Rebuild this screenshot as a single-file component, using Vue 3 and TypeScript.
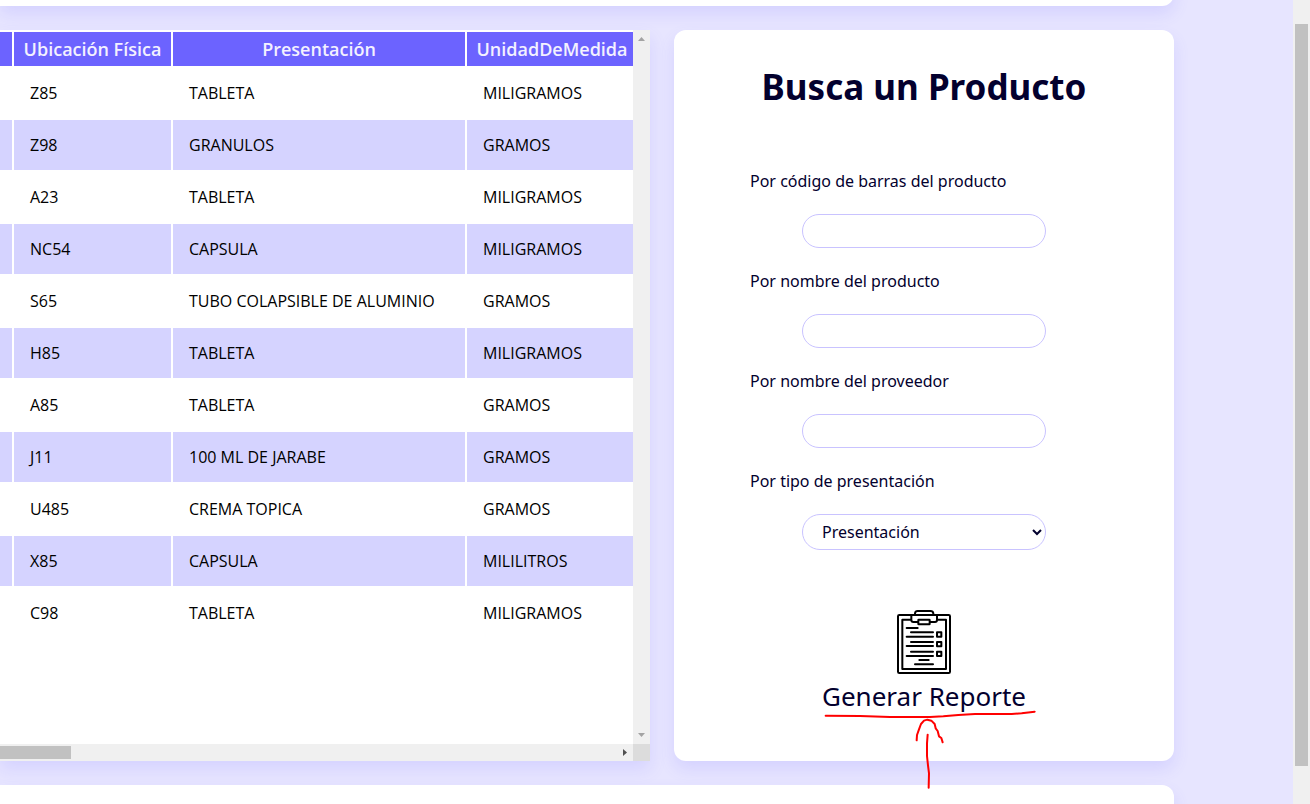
<script setup lang="ts">
import { ref } from 'vue'

interface Product {
  location: string
  form: string
  unit: string
}

interface SearchField {
  id: string
  label: string
}

const products: Product[] = [
  { location: 'Z85', form: 'TABLETA', unit: 'MILIGRAMOS' },
  { location: 'Z98', form: 'GRANULOS', unit: 'GRAMOS' },
  { location: 'A23', form: 'TABLETA', unit: 'MILIGRAMOS' },
  { location: 'NC54', form: 'CAPSULA', unit: 'MILIGRAMOS' },
  { location: 'S65', form: 'TUBO COLAPSIBLE DE ALUMINIO', unit: 'GRAMOS' },
  { location: 'H85', form: 'TABLETA', unit: 'MILIGRAMOS' },
  { location: 'A85', form: 'TABLETA', unit: 'GRAMOS' },
  { location: 'J11', form: '100 ML DE JARABE', unit: 'GRAMOS' },
  { location: 'U485', form: 'CREMA TOPICA', unit: 'GRAMOS' },
  { location: 'X85', form: 'CAPSULA', unit: 'MILILITROS' },
  { location: 'C98', form: 'TABLETA', unit: 'MILIGRAMOS' },
]

const fields: SearchField[] = [
  { id: 'barcode', label: 'Por código de barras del producto' },
  { id: 'name', label: 'Por nombre del producto' },
  { id: 'supplier', label: 'Por nombre del proveedor' },
]

const query = ref<Record<string, string>>({ barcode: '', name: '', supplier: '' })
const presentation = ref('')
</script>

<template>
  <div class="page">
    <main class="content">
      <section class="card card-above"></section>
      <div class="middle">
        <section class="table-box">
          <div class="table-view">
            <table>
              <colgroup>
                <col class="col-previous" />
                <col class="col-location" />
                <col class="col-form" />
                <col class="col-unit" />
              </colgroup>
              <thead>
                <tr>
                  <th></th>
                  <th scope="col">Ubicación Física</th>
                  <th scope="col">Presentación</th>
                  <th scope="col">UnidadDeMedida</th>
                </tr>
              </thead>
              <tbody>
                <tr v-for="product in products" :key="product.location">
                  <td></td>
                  <td>{{ product.location }}</td>
                  <td>{{ product.form }}</td>
                  <td>{{ product.unit }}</td>
                </tr>
              </tbody>
            </table>
          </div>
          <div class="bar-vertical">
            <svg width="7" height="4" viewBox="0 0 7 4"><path d="M0 4L3.5 0L7 4Z" fill="#a3a3a3" /></svg>
            <svg width="7" height="4" viewBox="0 0 7 4"><path d="M0 0L3.5 4L7 0Z" fill="#a3a3a3" /></svg>
          </div>
          <div class="bar-horizontal">
            <div class="thumb-horizontal"></div>
            <svg width="4" height="7" viewBox="0 0 4 7"><path d="M0 0L4 3.5L0 7Z" fill="#505050" /></svg>
          </div>
          <div class="bar-corner"></div>
        </section>

        <section class="card search">
          <h2>Busca un Producto</h2>
          <form @submit.prevent>
            <div v-for="field in fields" :key="field.id" class="field">
              <label :for="field.id">{{ field.label }}</label>
              <input :id="field.id" v-model="query[field.id]" type="text" />
            </div>
            <div class="field">
              <label for="presentation">Por tipo de presentación</label>
              <select id="presentation" v-model="presentation">
                <option value="">Presentación</option>
              </select>
            </div>
          </form>
          <a class="report" href="#">
            <svg class="clipboard" viewBox="51 30 162 192" fill="none" stroke="#000" stroke-width="6" stroke-linecap="round" stroke-linejoin="round">
              <rect x="54" y="45" width="156" height="174" rx="4" />
              <path d="M93 59H67V207H198V59H172" />
              <path d="M94 46V60Q94 66 100 66H114M150 66H165Q171 66 171 60V46" />
              <path d="M105 44V40Q106 33 113 33H151Q159 33 160 40V44" />
              <rect x="115" y="59" width="34" height="14" rx="1" />
              <path d="M80 84H113M93 97H159M80 110H159M93 126H159M80 138H159M93 155H159M80 168H159M118 180H146M105 193H159" />
              <path d="M171 97H184V110H171ZM171 126H184V139H171ZM171 155H184V168H171Z" />
            </svg>
            <span>Generar Reporte</span>
            <svg class="marks" viewBox="-18 90 720 300" fill="none" stroke="#f00" stroke-width="6" stroke-linecap="round" stroke-linejoin="round">
              <path d="M47 137L150 138L240 141H360L400 139L445 135L495 132H605L635 130L674 125" />
              <path d="M320 211L321 195L327 178L333 162L342 152L352 149L364 152L374 162L377 175L383 183L387 199L394 204L398 217" />
              <path d="M353 194L351 220V258L354 286L357 310L356 353" />
            </svg>
          </a>
        </section>
      </div>
      <section class="card card-below"></section>
    </main>
    <div class="page-bar"><div class="page-thumb"></div></div>
  </div>
</template>

<style>
body {
  margin: 0;
  overflow: hidden;
}
</style>

<style scoped>
.page {
  display: flex;
  height: 100vh;
  overflow: hidden;
  background: #e7e5ff;
  color: #03002e;
  font: 16px/24px "Noto Sans", sans-serif;
}

.content {
  flex: 1;
  min-width: 0;
  display: flex;
  flex-direction: column;
  gap: 24px;
  padding-right: 119px;
}

.card {
  background: #fff;
  border-radius: 12px;
  box-shadow: 0 8px 16px rgba(108, 99, 255, 0.14);
}

.card-above {
  flex: none;
  height: 32px;
  margin-top: -26px;
  border-radius: 0 12px 12px 0;
}

.card-below {
  flex: none;
  height: 40px;
  margin-bottom: -21px;
  border-radius: 0 12px 12px 0;
}

.middle {
  flex: 1;
  min-height: 0;
  display: flex;
  gap: 24px;
}

.table-box {
  flex: 1;
  min-width: 0;
  display: grid;
  grid-template-columns: minmax(0, 1fr) 17px;
  grid-template-rows: minmax(0, 1fr) 17px;
  background: #fff;
  box-shadow: 0 8px 16px rgba(108, 99, 255, 0.14);
}

.table-view {
  overflow: hidden;
}

table {
  table-layout: fixed;
  width: 641px;
  margin-left: -2px;
  border-spacing: 2px;
  color: #000;
  font-family: "Open Sans", sans-serif;
}

.col-previous {
  width: 12px;
}

.col-location {
  width: 157px;
}

.col-form {
  width: 292px;
}

th {
  height: 34px;
  padding: 0;
  background: #6c63ff;
  color: #f3f1ff;
  font-size: 18px;
  font-weight: 600;
  white-space: nowrap;
}

td {
  height: 50px;
  padding: 0 16px;
  white-space: nowrap;
}

th:first-child,
td:first-child {
  padding: 0;
}

tbody tr:nth-child(even) td {
  background: #d5d3ff;
}

.bar-vertical {
  display: flex;
  flex-direction: column;
  align-items: center;
  justify-content: space-between;
  padding: 7px 0;
  background: #f0f0f0;
}

.bar-horizontal {
  display: flex;
  align-items: center;
  justify-content: space-between;
  padding-right: 6px;
  background: #f0f0f0;
}

.thumb-horizontal {
  width: 71px;
  height: 13px;
  background: #c1c1c1;
}

.bar-corner {
  background: #dcdcdc;
}

.search {
  flex: none;
  box-sizing: border-box;
  width: 500px;
  padding: 32px 76px;
  display: flex;
  flex-direction: column;
  align-items: center;
}

h2 {
  margin: 0 0 56px;
  font-size: 35px;
  line-height: 50px;
  font-weight: 700;
}

form {
  align-self: stretch;
  display: flex;
  flex-direction: column;
  gap: 20px;
}

.field {
  display: flex;
  flex-direction: column;
  align-items: center;
  gap: 20px;
}

label {
  align-self: stretch;
  line-height: 26px;
}

input,
select {
  box-sizing: border-box;
  width: 244px;
  height: 34px;
  padding: 0 16px;
  border: 1px solid #c9c3ff;
  border-radius: 18px;
  background: #fff;
  color: inherit;
  font: inherit;
  outline: none;
}

select {
  height: 36px;
  padding: 0 0 0 15px;
}

.report {
  position: relative;
  display: flex;
  flex-direction: column;
  align-items: center;
  margin-top: 60px;
  color: inherit;
  font-size: 26px;
  line-height: 44px;
  text-decoration: none;
}

.clipboard {
  width: 54px;
  height: 64px;
}

.marks {
  position: absolute;
  top: 90px;
  left: 50%;
  width: 240px;
  height: 100px;
  margin-left: -120px;
}

.page-bar {
  flex: none;
  width: 17px;
  display: flex;
  justify-content: center;
  background: #f0f0f0;
}

.page-thumb {
  width: 13px;
  margin: 24px 0 38px;
  background: #c1c1c1;
}
</style>
